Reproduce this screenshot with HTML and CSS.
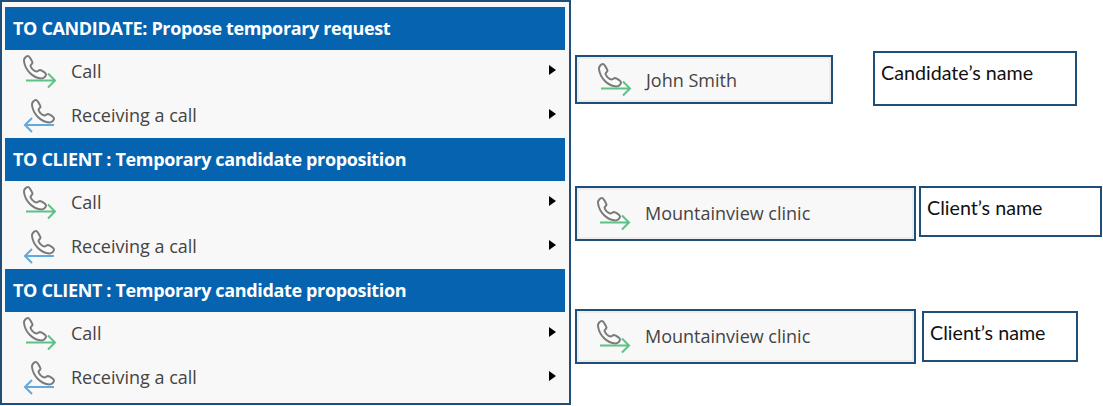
FILE: index.html
```html
<!DOCTYPE html>
<html lang="en">
<head>
    <meta charset="UTF-8">
    <title>Call menu</title>
    <link rel="stylesheet" href="styles.css">
</head>
<body>
    <svg class="icon-defs" width="0" height="0">
        <defs>
            <path id="handset" d="M1 6 C0.5 4 3 1 5 1 C6.5 1 9 6 9.5 7.5 C9.5 9 7.5 9.5 7.5 11 C8.5 13.5 11 16 13.5 16.5 C15 16.5 15.5 15 17 15 C19 15.5 23 18 23 19.5 C23 21.5 20.5 23.5 18.5 23.5 C10 23 2 15 1 6 Z"/>
        </defs>
    </svg>

    <main class="sheet">
        <section class="menu">
            <div class="menu-group">
                <h2 class="menu-title">TO CANDIDATE: Propose temporary request</h2>
                <div class="menu-row">
                    <svg class="call-icon" viewBox="0 0 34 34"><use href="#handset" class="phone"/><path class="out" d="M3 25.5H32M25 18.5L32 25.5L25 32.5"/></svg>
                    <span class="menu-label">Call</span><span class="caret"></span>
                </div>
                <div class="menu-row">
                    <svg class="call-icon" viewBox="0 0 34 34"><use href="#handset" x="8" class="phone"/><path class="in" d="M31 26H2M9 19L2 26L9 33"/></svg>
                    <span class="menu-label">Receiving a call</span><span class="caret"></span>
                </div>
            </div>
            <div class="menu-group">
                <h2 class="menu-title">TO CLIENT : Temporary candidate proposition</h2>
                <div class="menu-row">
                    <svg class="call-icon" viewBox="0 0 34 34"><use href="#handset" class="phone"/><path class="out" d="M3 25.5H32M25 18.5L32 25.5L25 32.5"/></svg>
                    <span class="menu-label">Call</span><span class="caret"></span>
                </div>
                <div class="menu-row">
                    <svg class="call-icon" viewBox="0 0 34 34"><use href="#handset" x="8" class="phone"/><path class="in" d="M31 26H2M9 19L2 26L9 33"/></svg>
                    <span class="menu-label">Receiving a call</span><span class="caret"></span>
                </div>
            </div>
            <div class="menu-group">
                <h2 class="menu-title">TO CLIENT : Temporary candidate proposition</h2>
                <div class="menu-row">
                    <svg class="call-icon" viewBox="0 0 34 34"><use href="#handset" class="phone"/><path class="out" d="M3 25.5H32M25 18.5L32 25.5L25 32.5"/></svg>
                    <span class="menu-label">Call</span><span class="caret"></span>
                </div>
                <div class="menu-row">
                    <svg class="call-icon" viewBox="0 0 34 34"><use href="#handset" x="8" class="phone"/><path class="in" d="M31 26H2M9 19L2 26L9 33"/></svg>
                    <span class="menu-label">Receiving a call</span><span class="caret"></span>
                </div>
            </div>
        </section>

        <section class="callouts">
            <div class="callout callout-candidate">
                <div class="call-button">
                    <svg class="call-icon" viewBox="0 0 34 34"><use href="#handset" class="phone"/><path class="out" d="M3 25.5H32M25 18.5L32 25.5L25 32.5"/></svg>
                    <span>John Smith</span>
                </div>
                <div class="note">Candidate’s name</div>
            </div>
            <div class="callout callout-client">
                <div class="call-button">
                    <svg class="call-icon" viewBox="0 0 34 34"><use href="#handset" class="phone"/><path class="out" d="M3 25.5H32M25 18.5L32 25.5L25 32.5"/></svg>
                    <span>Mountainview clinic</span>
                </div>
                <div class="note">Client’s name</div>
            </div>
            <div class="callout callout-client-2">
                <div class="call-button">
                    <svg class="call-icon" viewBox="0 0 34 34"><use href="#handset" class="phone"/><path class="out" d="M3 25.5H32M25 18.5L32 25.5L25 32.5"/></svg>
                    <span>Mountainview clinic</span>
                </div>
                <div class="note">Client’s name</div>
            </div>
        </section>
    </main>
</body>
</html>
```

FILE: styles.css
```css
:root {
    --frame: #1f4e79;
    --menu-blue: #0563b0;
    --menu-bg: #f8f8f8;
    --label: #444444;
}

* {
    margin: 0;
    padding: 0;
    box-sizing: border-box;
}

html, body {
    height: 100%;
    overflow: hidden;
}

body {
    background: white;
    font-family: "Open Sans", "Liberation Sans", sans-serif;
}

.icon-defs {
    display: block;
    height: 0;
}

.sheet {
    display: flex;
    align-items: flex-start;
}

/* Context menu */
.menu {
    width: 571px;
    height: 405px;
    padding: 5px 4px 0 3px;
    border: 2px solid var(--frame);
    background: var(--menu-bg);
}

.menu-group {
    height: 131px;
}

.menu-title {
    height: 43px;
    padding-left: 8px;
    background: var(--menu-blue);
    color: white;
    font-size: 18px;
    font-weight: 700;
    line-height: 42px;
    letter-spacing: -0.35px;
}

.menu-row {
    display: flex;
    align-items: center;
    height: 44px;
    padding-left: 18px;
    padding-right: 9px;
}

.menu-label {
    flex: 1;
    margin-left: 14px;
    margin-bottom: 2px;
    color: var(--label);
    font-size: 18px;
}

.caret {
    width: 0;
    height: 0;
    margin-bottom: 4px;
    border-left: 7px solid black;
    border-top: 5px solid transparent;
    border-bottom: 5px solid transparent;
}

/* Icons */
.call-icon {
    flex: none;
    width: 34px;
    height: 34px;
    overflow: visible;
    fill: none;
}

.phone {
    fill: #fbfbfb;
    stroke: #7a7a7a;
    stroke-width: 2;
}

.out, .in {
    fill: none;
    stroke-width: 2;
}

.out {
    stroke: #5cc285;
}

.in {
    stroke: #62a9dc;
}

/* Right-hand callouts */
.callouts {
    margin-left: 4px;
    padding-top: 51px;
}

.callout {
    display: flex;
    align-items: flex-start;
}

.callout-client {
    margin-top: 80px;
}

.callout-client-2 {
    margin-top: 68px;
}

.call-button {
    display: flex;
    align-items: center;
    width: 341px;
    height: 55px;
    padding-left: 20px;
    border: 2px solid var(--frame);
    background: #f8f8f8;
    box-shadow: inset 0 0 0 2px #ececec;
    color: var(--label);
    font-size: 18px;
}

.call-button span {
    margin-left: 14px;
    margin-bottom: 2px;
}

.note {
    padding: 9px 6px;
    border: 2px solid var(--frame);
    background: white;
    color: #111;
    font-family: Lato, "Liberation Sans", sans-serif;
    font-size: 19.7px;
    line-height: 22px;
}

.callout-candidate .call-button {
    width: 258px;
    height: 49px;
    margin-top: 4px;
    padding-left: 21px;
}

.callout-candidate .call-button span {
    margin-bottom: 0;
}

.callout-candidate .note {
    width: 204px;
    height: 55px;
    margin-left: 40px;
}

.callout-client .note {
    width: 183px;
    height: 51px;
    margin-left: 3px;
}

.callout-client-2 .note {
    width: 156px;
    height: 51px;
    margin-left: 6px;
    margin-top: 2px;
}
```
